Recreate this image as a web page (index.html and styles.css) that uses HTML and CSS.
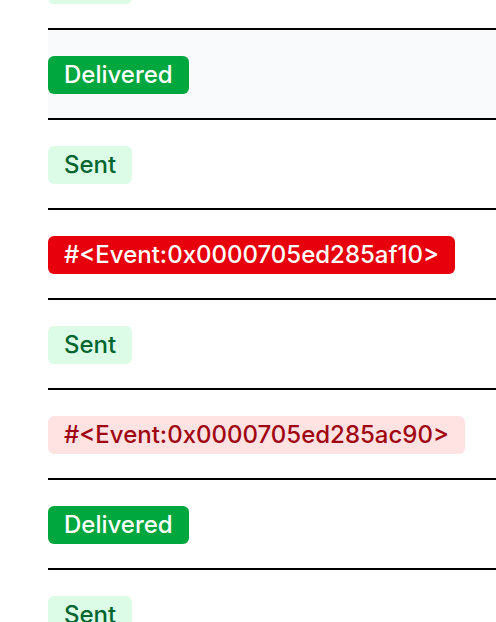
FILE: index.html
```html
<!DOCTYPE html>
<html>
<head>
<meta charset="utf-8">
<link rel="stylesheet" href="styles.css">
</head>
<body>
<div class="list">
  <div class="row"><span class="badge sent">Sent</span></div>
  <div class="row alt"><span class="badge delivered">Delivered</span></div>
  <div class="row"><span class="badge sent">Sent</span></div>
  <div class="row"><span class="badge failed">#&lt;Event:0x0000705ed285af10&gt;</span></div>
  <div class="row"><span class="badge sent">Sent</span></div>
  <div class="row"><span class="badge error">#&lt;Event:0x0000705ed285ac90&gt;</span></div>
  <div class="row"><span class="badge delivered">Delivered</span></div>
  <div class="row"><span class="badge sent">Sent</span></div>
</div>
</body>
</html>
```

FILE: styles.css
```css
html, body {
  margin: 0;
  padding: 0;
  background: #ffffff;
  overflow: hidden;
}
body {
  font-family: Inter, "Noto Sans", sans-serif;
}
.list {
  margin-top: -60px;
  margin-left: 48px;
}
.row {
  height: 88px;
  box-sizing: content-box;
  border-bottom: 2px solid #000;
  padding: 0;
  display: flex;
  align-items: flex-start;
}
.row.alt {
  background: #f9fafb;
}
.badge {
  margin-top: 26px;
  display: inline-block;
  height: 38px;
  line-height: 38px;
  padding: 0 16px;
  border-radius: 6px;
  font-size: 24px;
  font-weight: 500;
  white-space: nowrap;
}
.sent {
  background: #dcfce7;
  color: #016630;
}
.delivered {
  background: #00a63e;
  color: #ffffff;
}
.failed {
  background: #e7000b;
  color: #ffffff;
}
.error {
  background: #ffe2e2;
  color: #9f0712;
}
```
